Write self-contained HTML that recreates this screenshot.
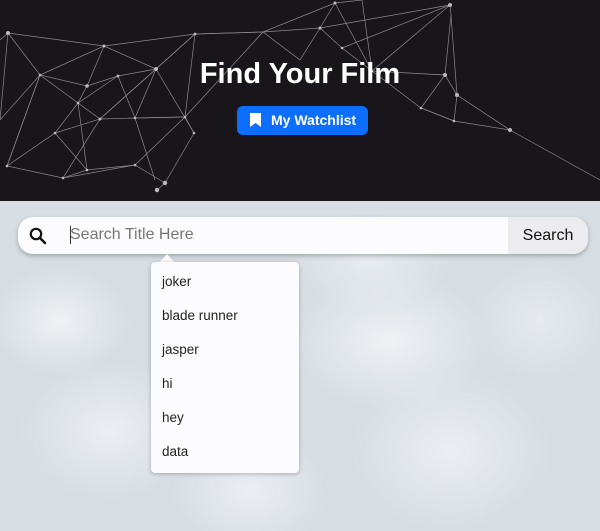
<!DOCTYPE html>
<html><head><meta charset="utf-8"><style>
*{margin:0;padding:0;box-sizing:border-box}
body{width:600px;height:531px;overflow:hidden;font-family:"Liberation Sans",sans-serif;position:relative;background:#d9dfe4}
.hdr{position:absolute;left:0;top:0;width:600px;height:201px;background:#18161a}
.bg{position:absolute;left:0;top:201px;width:600px;height:330px;background:
radial-gradient(ellipse 70px 55px at 60px 120px,#eef1f4,transparent),
radial-gradient(ellipse 90px 70px at 110px 230px,#ebeef2,transparent),
radial-gradient(ellipse 100px 70px at 390px 140px,#eef1f4,transparent),
radial-gradient(ellipse 100px 80px at 450px 250px,#ebeef2,transparent),
radial-gradient(ellipse 80px 60px at 250px 290px,#ebeef2,transparent),
radial-gradient(ellipse 70px 60px at 540px 120px,#e6eaee,transparent),
radial-gradient(ellipse 80px 50px at 370px 60px,#e8ecf0,transparent),
#d7dde2}
h1{position:absolute;top:58px;left:0;width:600px;text-align:center;color:#fff;font-size:29px;font-weight:bold}
.btn{position:absolute;left:237px;top:106px;width:131px;height:29px;background:#0d6efd;border-radius:6px;color:#fff;font-weight:bold;font-size:14px;line-height:29px;padding-left:34px}
.btn svg{position:absolute;left:13px;top:7px}
.bar{position:absolute;left:18px;top:217px;width:570px;height:37px;background:#fcfbfd;border-radius:15px;box-shadow:0 2px 5px rgba(0,0,0,.25);overflow:hidden}
.bar .ph{position:absolute;left:52px;top:9px;font-size:16px;color:#777}
.bar .cur{position:absolute;left:52px;top:9px;width:1px;height:18px;background:#333}
.bar .sb{position:absolute;right:0;top:0;width:80px;height:37px;background:#ececef;font-size:16px;line-height:37px;text-align:center;color:#111}
.dd{position:absolute;left:151px;top:262px;width:148px;height:211px;background:#fcfbfd;border-radius:4px;box-shadow:0 1px 4px rgba(0,0,0,.25)}
.dd div{height:34px;line-height:34px;padding-left:11px;font-size:13.5px;color:#222;margin-top:3px}
.dd div+div{margin-top:0}
.tri{position:absolute;left:160px;top:254px;width:0;height:0;border-left:7px solid transparent;border-right:7px solid transparent;border-bottom:8px solid #fcfbfd}
</style></head><body>
<div class="hdr">
<svg width="600" height="201" style="position:absolute;left:0;top:0" stroke="#b0b0b4" stroke-width=".7" fill="none" opacity=".75">
<polyline points="8,33 40,75 87,86 118,76 156,69 195,34 263,32 335,3 362,0"/>
<polyline points="8,33 104,46 156,69 100,119 55,133 7,166 63,178 135,165 165,183 157,190"/>
<polyline points="104,46 87,86 78,103 55,133 87,170 135,165 185,117 194,133 165,183"/>
<polyline points="195,34 185,117 135,118 100,119 78,103 118,76 135,118 155,180"/>
<polyline points="40,75 78,103 87,170 63,178 100,119 156,69 194,133"/>
<polyline points="195,34 156,69 135,118 185,117 263,32 320,28 342,48 372,71 421,108 454,121 510,130"/>
<polyline points="335,3 320,28 300,60 263,32 195,34 104,46 40,75 7,166"/>
<polyline points="342,48 450,5 451,15 445,75 457,95 454,121 421,108 445,75 372,71 335,3"/>
<polyline points="451,15 457,95 510,130 600,180"/>
<polyline points="362,0 372,71 450,5 320,28"/>
<polyline points="0,40 8,33 0,120 40,75 7,166"/>
</svg>
<svg width="600" height="201" style="position:absolute;left:0;top:0" fill="#bbb">
<circle cx="8" cy="33" r="2"/><circle cx="104" cy="46" r="1.5"/><circle cx="40" cy="75" r="1.3"/><circle cx="87" cy="86" r="1.8"/><circle cx="118" cy="76" r="1.4"/><circle cx="156" cy="69" r="2"/><circle cx="195" cy="34" r="1.4"/><circle cx="100" cy="119" r="1.5"/><circle cx="78" cy="103" r="1.3"/><circle cx="135" cy="118" r="1.3"/><circle cx="185" cy="117" r="1.3"/><circle cx="55" cy="133" r="1.3"/><circle cx="7" cy="166" r="1.3"/><circle cx="87" cy="170" r="1.3"/><circle cx="63" cy="178" r="1.3"/><circle cx="135" cy="165" r="1.3"/><circle cx="165" cy="183" r="2.2"/><circle cx="157" cy="190" r="2.2"/><circle cx="194" cy="133" r="1.3"/><circle cx="335" cy="3" r="1.5"/><circle cx="320" cy="28" r="1.5"/><circle cx="342" cy="48" r="1.3"/><circle cx="372" cy="71" r="1.3"/><circle cx="450" cy="5" r="2"/><circle cx="445" cy="75" r="2"/><circle cx="457" cy="95" r="2"/><circle cx="421" cy="108" r="1.3"/><circle cx="454" cy="121" r="1.3"/><circle cx="510" cy="130" r="2"/>
</svg>
<h1>Find Your Film</h1>
<div class="btn"><svg width="11" height="14" viewBox="0 0 11 14"><path d="M0 0H11V14L5.5 10L0 14Z" fill="#fff"/></svg>My Watchlist</div>
</div>
<div class="bg"></div>
<div class="bar">
<svg width="18" height="18" viewBox="0 0 18 18" style="position:absolute;left:11px;top:10px"><circle cx="7" cy="7" r="5.2" stroke="#111" stroke-width="2.2" fill="none"/><path d="M11 11L16 16" stroke="#111" stroke-width="2.6" stroke-linecap="round"/></svg>
<div class="ph">Search Title Here</div><div class="cur"></div>
<div class="sb">Search</div>
</div>
<div class="tri"></div>
<div class="dd"><div>joker</div><div>blade runner</div><div>jasper</div><div>hi</div><div>hey</div><div>data</div></div>
</body></html>
